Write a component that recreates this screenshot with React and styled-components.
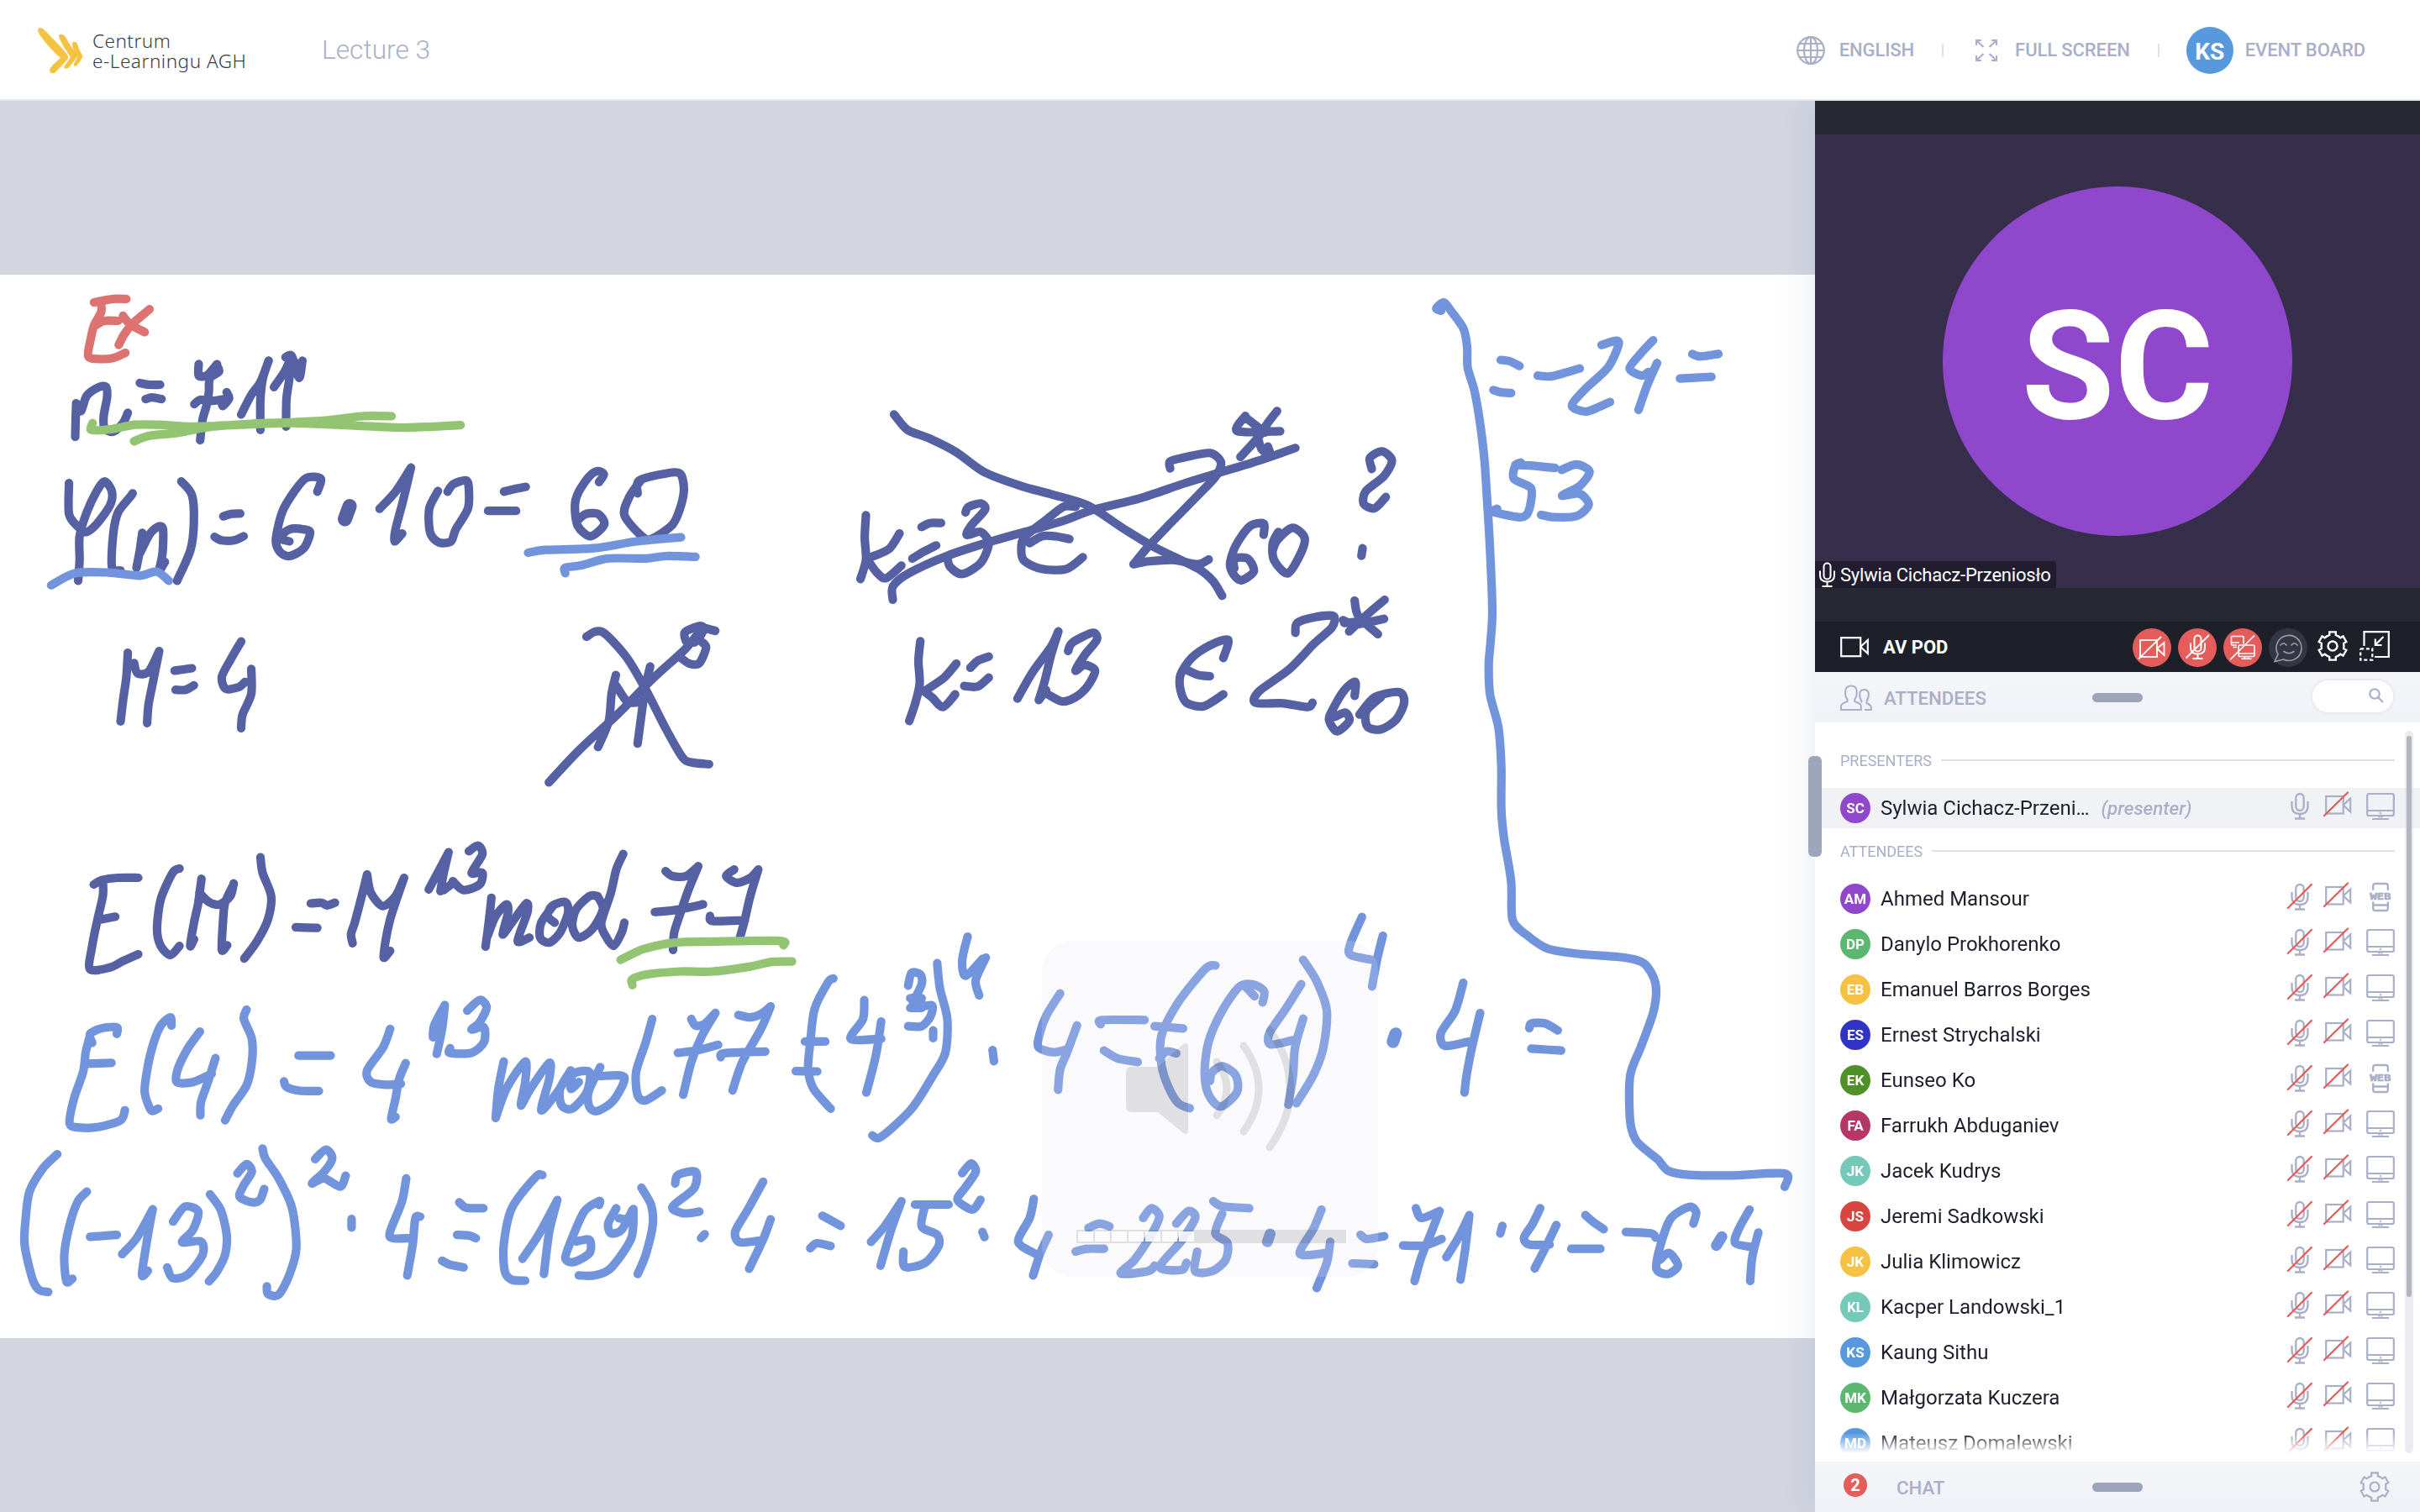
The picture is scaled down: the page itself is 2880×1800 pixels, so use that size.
import React from "react";
import styled, { createGlobalStyle } from "styled-components";

const GlobalStyle = createGlobalStyle`
  *, *::before, *::after { box-sizing: border-box; }
  body { margin: 0; overflow: hidden; background: #fff; font-family: Roboto, "Noto Sans", sans-serif; }
`;

const MUTED = "#a9afc6";
const RED = "#e45d5a";

/* ---------- page frame ---------- */

const Page = styled.div`
  width: 2880px;
  height: 1800px;
  display: flex;
  flex-direction: column;
  overflow: hidden;
`;

const TopBar = styled.header`
  position: relative;
  z-index: 1;
  height: 120px;
  flex: none;
  display: flex;
  align-items: center;
  border-bottom: 2px solid #e7ebf1;
  background: #fff;
  padding: 2px 65px 0 45px;
`;

const Brand = styled.div`
  width: 338px;
  display: flex;
  align-items: center;
  gap: 11px;
`;

const BrandText = styled.div`
  font-family: "Noto Sans", "Open Sans", sans-serif;
  font-weight: 300;
  font-size: 22.5px;
  line-height: 24px;
  color: #3c3c3e;
  white-space: nowrap;
  padding-top: 2px;
`;

const BrandLine = styled.div`
  letter-spacing: ${(p) => p.$spacing}px;
`;

const Title = styled.h1`
  margin: 0;
  flex: 1;
  font-weight: 300;
  font-size: 31.7px;
  line-height: 40px;
  color: ${MUTED};
`;

const TopNav = styled.nav`
  display: flex;
  align-items: center;
`;

const NavItem = styled.div`
  display: flex;
  align-items: center;
  gap: ${(p) => p.$gap}px;
  font-weight: 500;
  font-size: 22px;
  letter-spacing: -0.1px;
  line-height: 28px;
  color: ${MUTED};
  white-space: nowrap;
`;

const NavDivider = styled.div`
  width: 2px;
  height: 16px;
  margin: 0 ${(p) => p.$after}px 0 33px;
  background: #dfe2ea;
`;

const Body = styled.div`
  flex: 1;
  display: flex;
  min-height: 0;
`;

/* ---------- whiteboard ---------- */

const Stage = styled.main`
  width: 2160px;
  background: #d3d6e1;
  padding: 207px 0;
  display: flex;
`;

const Board = styled.section`
  position: relative;
  flex: 1;
  background: #fff;
  overflow: hidden;
`;

const InkLayer = styled.svg`
  display: block;
  width: 2160px;
  height: 1266px;
`;

const VolumeHud = styled.div`
  position: absolute;
  left: 1240px;
  top: 793px;
  width: 400px;
  height: 400px;
  border-radius: 36px;
  background: rgba(232, 232, 242, 0.2);
  display: flex;
  flex-direction: column;
  justify-content: space-between;
  padding: 94px 38px 40px 41px;
`;

const SpeakerArt = styled.svg`
  display: block;
  width: 220px;
  height: 170px;
  margin-left: 52px;
`;

const Level = styled.div`
  display: flex;
  width: 321px;
  height: 16px;
  background: rgba(0, 0, 0, 0.1);
  padding: 2px 0 2px 2px;
  gap: 2px;
`;

const LevelCell = styled.div`
  width: 18px;
  background: rgba(255, 255, 255, 0.85);
`;

/* ---------- side panel ---------- */

const Side = styled.aside`
  position: relative;
  width: 720px;
  display: flex;
  flex-direction: column;
  background: #fff;
  box-shadow: 0 0 44px rgba(80, 100, 130, 0.14);
`;

const Resizer = styled.div`
  position: absolute;
  left: -8px;
  top: 780px;
  width: 16px;
  height: 120px;
  border-radius: 6px;
  background: #9ca5ba;
`;

const VideoPod = styled.div`
  height: 620px;
  padding: 40px 0;
  background: #262931;
`;

const VideoTile = styled.div`
  position: relative;
  height: 540px;
  background: #372e4b;
  display: flex;
  align-items: center;
  justify-content: center;
`;

const Avatar = styled.div`
  flex: none;
  width: ${(p) => p.$size}px;
  height: ${(p) => p.$size}px;
  border-radius: 50%;
  background: ${(p) => p.$color};
  color: #fff;
  font-weight: 700;
  font-size: ${(p) => p.$font}px;
  line-height: 1;
  padding-top: ${(p) => p.$drop || 0}px;
  display: flex;
  align-items: center;
  justify-content: center;
`;

const SpeakerTag = styled.div`
  position: absolute;
  left: 0;
  bottom: 0;
  height: 32px;
  padding: 1px 6px 0 5px;
  display: flex;
  align-items: center;
  gap: 6px;
  border-top-right-radius: 4px;
  background: #211c2e;
  color: #fff;
  font-size: 22px;
  letter-spacing: -0.2px;
  line-height: 32px;
  white-space: nowrap;
`;

const PodBar = styled.div`
  height: 60px;
  flex: none;
  display: flex;
  align-items: center;
  padding: 0 36px 0 30px;
  background: #1d1f29;
  color: #fff;
`;

const PodTitle = styled.div`
  flex: 1;
  padding: 1px 0 0 17px;
  font-weight: 700;
  font-size: 22px;
`;

const PodTools = styled.div`
  display: flex;
  align-items: center;
  gap: 8px;
  padding-top: 1px;
`;

const RoundTool = styled.div`
  width: 46px;
  height: 46px;
  border-radius: 50%;
  background: ${(p) => (p.$off ? RED : "#343743")};
  display: flex;
  align-items: center;
  justify-content: center;
`;

const PlainTool = styled.div`
  width: ${(p) => p.$width}px;
  height: 46px;
  margin-left: ${(p) => p.$before || 0}px;
  display: flex;
  align-items: center;
  justify-content: center;
  padding-bottom: 3px;
`;

const PanelBar = styled.div`
  height: 60px;
  flex: none;
  display: grid;
  grid-template-columns: 1fr 60px 1fr;
  align-items: center;
  padding: 0 30px;
  background: linear-gradient(#f5f6fa, #eff1f6);
`;

const PanelTitle = styled.div`
  display: flex;
  align-items: center;
  gap: ${(p) => p.$gap}px;
  padding-top: 1px;
  font-weight: 500;
  font-size: 22.2px;
  line-height: 28px;
  color: ${MUTED};
`;

const Grip = styled.div`
  height: 11px;
  border-radius: 5.5px;
  background: #9ca5ba;
`;

const PanelEnd = styled.div`
  display: flex;
  justify-content: flex-end;
  padding-right: ${(p) => p.$inset || 0}px;
`;

const SearchBox = styled.div`
  width: 100px;
  height: 42px;
  margin-bottom: 3px;
  border: 2px solid #e9ebf1;
  border-radius: 21px;
  background: #fff;
  display: flex;
  align-items: center;
  justify-content: flex-end;
  padding: 0 11px 2px 0;
`;

const Unread = styled.div`
  width: 28px;
  height: 28px;
  margin: 0 0 5px 4px;
  border-radius: 50%;
  background: ${RED};
  color: #fff;
  font-weight: 700;
  font-size: 20px;
  line-height: 29px;
  text-align: center;
`;

const Roster = styled.div`
  position: relative;
  height: 880px;
  flex: none;
  background: #fff;
`;

const RosterList = styled.div`
  height: 870px;
  overflow: hidden;
  padding-top: 30px;
  mask-image: linear-gradient(#000 846px, transparent 870px);
`;

const Section = styled.div`
  display: flex;
  align-items: center;
  gap: 11px;
  height: 30px;
  margin: ${(p) => p.$before}px 30px 18px;
  font-size: 18px;
  color: ${MUTED};
  &::after {
    content: "";
    flex: 1;
    height: 2px;
    background: #dde2e9;
  }
`;

const Person = styled.div`
  height: 48px;
  margin-bottom: ${(p) => (p.$lead ? 0 : 6)}px;
  padding: 0 30px;
  display: flex;
  align-items: center;
  background: ${(p) => (p.$lead ? "#f1f2f6" : "transparent")};
`;

const PersonName = styled.div`
  padding-left: 12px;
  font-size: 24px;
  line-height: 32px;
  color: #1d1f2b;
  white-space: nowrap;
`;

const Role = styled.div`
  padding-left: 14px;
  font-style: italic;
  font-weight: 500;
  font-size: 22.4px;
  color: ${MUTED};
`;

const StatusIcons = styled.div`
  margin-left: auto;
  display: flex;
  align-items: center;
  & > :nth-child(1) { margin-right: 13px; margin-top: -5px; }
  & > :nth-child(2) { margin-right: 17px; margin-top: -9px; }
  & > :nth-child(3) { margin-top: -5px; }
`;

const ScrollTrack = styled.div`
  position: absolute;
  right: 8px;
  top: 10px;
  width: 10px;
  height: 860px;
  padding: 6px 2px;
  border-radius: 5px;
  background: rgba(205, 207, 217, 0.4);
`;

const ScrollThumb = styled.div`
  height: 668px;
  border-radius: 3px;
  background: #b3b6c1;
`;

/* ---------- icons ---------- */

const Glyph = styled.svg`
  display: block;
  flex: none;
`;

const Svg = ({ w, h, color = "currentColor", sw = 2, children }) => (
  <Glyph width={w} height={h} viewBox={`0 0 ${w} ${h}`} fill="none" stroke={color} strokeWidth={sw}>
    {children}
  </Glyph>
);

const Chevrons = () => (
  <Svg w={54} h={56} color="#f5c242" sw={0}>
    <g fill="#f5c242">
      <path d="M0 5C0 0 4 0 7 3C18 14 29 25 35 33C37 36 36 37 35 39C31 43 25 50 21 54C17 57 12 54 15 49C18 44 23 41 27 37C18 29 4 14 0 5Z" />
      <path d="M25 11C25 8 30 8 33 12C36 18 42 27 46 32C48 35 46 37 45 38C42 42 39 47 36 49C33 51 30 49 32 46C34 43 37 40 39 36C35 30 26 17 25 11Z" />
      <path d="M41 20C41 17 45 17 47 20C48 25 51 30 53 34C54 36 53 37 52 38C50 41 48 45 46 46C44 48 42 46 43 44C44 41 46 39 47 36C44 30 41 25 41 20Z" />
    </g>
  </Svg>
);

const Globe = () => (
  <Svg w={34} h={34} sw={2.2}>
    <circle cx="17" cy="17" r="15.8" />
    <ellipse cx="17" cy="17" rx="8" ry="15.8" />
    <path d="M17 1V33M1 17H33M3.5 9H30.500M3.500 25H30.500" />
  </Svg>
);

const Expand = () => (
  <Svg w={26} h={26} sw={2.2}>
    <path d="M1 7V1H7M1 1L9.500 9M19 1H25V7M25 1L16.500 9M1 19V25H7M1 25L9.500 17M19 25H25V19M25 25L16.500 17" />
  </Svg>
);

const Mic = ({ muted }) => (
  <Svg w={30} h={34} color={MUTED} sw={2.300}>
    <rect x="10.300" y="2" width="9.400" height="20" rx="4.700" />
    <path d="M5.500 11V17C5.500 22.500 9 26 15 26C21 26 24.500 22.500 24.500 17V11M15 26V31M9 31.500H21" />
    {muted && <path d="M0.800 30L28.800 2" stroke={RED} strokeWidth="2.300" strokeLinecap="round" />}
  </Svg>
);

const WhiteMic = ({ slash }) => (
  <Svg w={slash ? 28 : 19} h={31} color="#fff" sw={2}>
    <g transform={slash ? "translate(5 0)" : undefined}>
      <rect x="5.500" y="1.500" width="8" height="19" rx="4" />
      <path d="M1 10.500V16C1 21 4.500 23.500 9.500 23.500C14.500 23.500 18 21 18 16V10.500M9.500 23.500V28M3.500 29H15.500" />
    </g>
    {slash && <path d="M0.500 28.500L28 1" />}
  </Svg>
);

const CamStatus = () => (
  <Svg w={34} h={34} color={MUTED} sw={2.200}>
    <rect x="3.200" y="7" width="20.500" height="20.500" />
    <path d="M23.700 17.500L32.200 9.500V25.500L23.700 17.500" />
    <path d="M1 30L29 2.500" stroke={RED} strokeWidth="2.300" strokeLinecap="round" />
  </Svg>
);

const Camera = ({ slash }) => (
  <Svg w={34} h={28} color="#fff" sw={slash ? 1.800 : 2.200}>
    <rect x={slash ? 3 : 1.200} y={slash ? 5 : 3.200} width={slash ? 20 : 23} height={slash ? 20 : 22} />
    <path d={slash ? "M23 15L31.500 8V23L23 15" : "M24.200 14L32.800 6V22L24.200 14"} />
    {slash && <path d="M1 27.500L28 1" />}
  </Svg>
);

const Screens = () => (
  <Svg w={30} h={30} color="#fff" sw={1.600}>
    <path d="M8 12H2.500Q1.500 12 1.500 11V2.500Q1.500 1.500 2.500 1.500H15Q16 1.500 16 2.500V10.500M1.500 9H11M3.500 14.500H8" />
    <rect x="10" y="12" width="19" height="13.500" rx="1.500" />
    <path d="M10 22H29M17.500 25.500V28M21.500 25.500V28M13.500 28.300H25.500M0 29.500L29 0.500" />
  </Svg>
);

const Smiley = () => (
  <Svg w={36} h={36} color="#9c9ea6" sw={1.600}>
    <path d="M6 26A15 15 0 1 1 12.500 32L2 34.500Z" />
    <path d="M9 15Q12.500 10.500 16 15M22 15Q25.500 10.500 29 15M13 22.500Q19 27 25 22.500" strokeLinecap="round" />
  </Svg>
);

const gearPath = (() => {
  const pts = [];
  for (let i = 0; i < 6; i++) {
    const a = (i * Math.PI) / 3 - Math.PI / 2;
    const at = (r, off) => [18 + r * Math.cos(a) - off * Math.sin(a), 18 + r * Math.sin(a) + off * Math.cos(a)];
    pts.push(at(11.6, -6.7), at(13, -3.8), at(16.6, -3.8), at(16.600, 3.800), at(13, 3.800), at(11.600, 6.700));
  }
  return "M" + pts.map((p) => p.map((n) => n.toFixed(2)).join(" ")).join("L") + "Z";
})();

const Gear = ({ color, sw = 2 }) => (
  <Svg w={36} h={36} color={color} sw={sw}>
    <path d={gearPath} />
    <circle cx="18" cy="18" r="5.500" />
  </Svg>
);

const Dock = () => (
  <Svg w={36} h={36} color="#fff" sw={2.200}>
    <path d="M5.500 18V1.200H34.800V31H18" />
    <path d="M28.500 7L19 16.500M18.800 9.500V17H26.500" />
    <path d="M1.200 21.300H15.300V34.700H1.200V21.300" strokeDasharray="4 2.700" />
  </Svg>
);

const People = () => (
  <Svg w={38} h={32} color={MUTED} sw={2}>
    <path d="M1 30V25.500C1 23 4 21.800 8.500 20V17.500C6.500 15.500 5.800 12 6.200 7.500C6.500 3.500 9 1.500 13 1.500C17 1.500 19.300 3.500 19.600 7.500C20 12 19.200 15.500 17.200 17.500V20C22 21.800 24.800 23 24.800 25.500V30Z" />
    <path d="M29 30H36.800V27C36.800 24.500 34.500 23.500 31.500 22V19.500C33.500 17 34 14.500 33.800 11C33.500 8 31.500 6 28.500 6C25.500 6 23.500 8 23.200 11C23 14.500 23.500 17 25.300 19.500V21.500" />
  </Svg>
);

const Lens = () => (
  <Svg w={18} h={18} color={MUTED} sw={2.2}>
    <circle cx="7" cy="7" r="5.700" />
    <path d="M11 11L17 17" />
  </Svg>
);

const Monitor = () => (
  <Svg w={34} h={34} color={MUTED} sw={2.200}>
    <rect x="1.200" y="2" width="31.600" height="26" rx="2" />
    <path d="M1 22H33M15.500 28V30.500M18.500 28V30.500M7 32H27" />
    <circle cx="17" cy="25" r="1" strokeWidth="1" />
  </Svg>
);

const WebPhone = () => (
  <Svg w={34} h={36} color={MUTED} sw={2.300}>
    <path d="M8.200 9.800V4.500Q8.200 2 10.700 2H23.300Q25.800 2 25.800 4.500V9.800M8.200 23.500V31.500Q8.200 34 10.700 34H23.300Q25.800 34 25.800 31.500V23.500M8.200 27.500H25.800" />
    <text x="17" y="20.500" textAnchor="middle" fontFamily='"DejaVu Sans Mono", monospace' fontWeight="700" fontSize="11" textLength="25" lengthAdjust="spacingAndGlyphs" fill={MUTED} strokeWidth="0.700">WEB</text>
  </Svg>
);

/* ---------- handwriting ---------- */

const NAVY = "#5561a2";
const BLUE = "#7294dd";
const ROSE = "#dc7370";
const LEAF = "#93c472";

/* Each patch of the board keeps its pen points on its own grid. */
const patches = [
  {
    origin: [0, 320],
    unit: [900 / 1568, 640 / 1568],
    ink: [
      [ROSE, "262,88 235,88 195,98;209,98 210,125 195,165 188,205 183,255 205,263 235,260 260,245;195,168 215,152 245,152;255,137 270,162 300,185;310,118 275,160 258,190 246,222"],
      [NAVY, "158,392 157,430 156,490;158,400 168,415 180,370 205,345 220,345 222,375 215,430 217,465 235,475 255,450 265,420;290,333 310,338 332,338;302,380 315,375 335,380"],
      [NAVY, "412,278 412,312 430,310 450,278;450,282 454,300 435,320 433,360 428,400 420,440 415,500;403,395 415,382 440,385 465,380;470,360 475,378 462,400 460,385;500,425 520,370 540,330 557,268;557,268 545,320 540,380 540,470"],
      [NAVY, "568,345 590,300 605,255;592,258 605,255 620,318 627,268;605,255 600,320 594,380 593,460;610,270 620,300"],
      [NAVY, "143,625 143,715 160,750 178,768 200,745 228,690 232,650 217,620 200,650 180,710 165,780 165,850 162,910;275,655 270,665 245,710 235,770 232,870 250,880;295,770 290,820 283,872;290,830 310,775 328,752 338,760 337,830 330,880 342,855;376,620 398,660 402,740 395,820 367,910"],
      [NAVY, "463,722 480,715 498,714;445,782 460,792 485,792 505,780;658,650 665,612 635,610 610,650 585,710 572,790 580,825 600,838 630,815 643,770 630,760 600,760 580,785 600,795"],
      [NAVY, "725,692 715,730", 17],
      [NAVY, "787,700 820,650 852,580;852,580 835,680 820,760 818,795 834,772;908,648 890,700 892,770 910,798 935,795 945,760 970,700 972,640 966,617 940,628 928,650;1045,650 1065,643 1090,636;1012,706 1070,706"],
      [NAVY, "1242,622 1252,600 1240,590 1222,605 1200,650 1192,690 1198,750 1225,780 1253,745 1240,715 1215,715 1200,730;1322,655 1325,618 1380,597 1410,597 1418,640 1412,690 1395,745 1355,785 1335,785 1295,720 1305,665 1330,615"],
      [LEAF, "192,450 190,470 230,468 280,455 330,455 400,460 500,455 600,450 700,455 830,463 900,460 955,456;278,503 310,487 370,478 430,462 520,452 600,448 680,442 750,430 812,430"],
      [BLUE, "1095,828 1130,820 1230,815 1320,795 1412,783;1172,888 1172,872 1205,865 1260,845 1340,845 1380,838 1442,840;106,923 155,888 225,886 290,895 325,883 350,910"],
      [NAVY, "265,1120 262,1190 255,1260 250,1320;278,1150 285,1180 308,1175 330,1115;330,1115 318,1200 308,1270 305,1325;362,1172 398,1165;364,1228 385,1228 402,1215;500,1087 478,1140 460,1190 468,1225 495,1220 508,1205;521,1167 521,1240 503,1300 500,1340"],
      [NAVY, "1216,1073 1235,1058 1255,1065 1300,1135 1340,1230 1380,1340 1415,1425 1435,1440 1470,1445;1138,1498 1200,1405 1280,1300 1350,1200 1420,1110 1455,1050;1277,1185 1268,1240 1262,1320 1240,1395;1277,1215 1300,1262 1320,1265;1348,1160 1338,1220 1330,1300 1322,1385"],
      [NAVY, "1422,1085 1420,1060 1450,1042 1460,1050 1450,1075 1440,1090;1483,1056 1455,1045;1455,1088 1464,1105 1450,1150 1430,1152 1412,1135"],
    ],
  },
  {
    origin: [960, 460],
    unit: [1140 / 1568, 1 / 3],
    ink: [
      [NAVY, "143,100 165,155 200,185 245,235 290,305 350,355 400,385 460,425 520,510 570,575 640,650 665,695 680,748;141,762 141,715 165,670 230,605 300,555 370,512 420,480 470,440 545,400 620,345 680,305 740,265 800,220"],
      [NAVY, "97,460 95,540 97,620 88,688;152,525 135,580 105,610;100,620 115,665 130,685 155,640;188,502 202,488 220,488;173,615 190,592 212,568;260,450 265,430 285,418 292,440 270,495 262,530 285,520 298,560 285,630 255,670 235,645 230,610"],
      [NAVY, "440,430 420,430 390,480 360,530 352,560 355,620 385,652 425,652 452,610;365,560 385,535 405,535 430,545;595,293 595,268 620,253 660,238 678,270 670,320 640,390 595,490 560,570 535,635;535,635 560,625 600,620 640,635 658,618"],
      [NAVY, "718,105 705,160 775,160;718,110 750,165;770,88 755,130 740,180 710,252;738,180 745,225 758,240 755,215;748,530 748,490 725,500 702,570 693,635 700,675 712,692 732,660 722,615 700,615 700,650;772,520 763,560 765,620 787,668 808,600 815,540 795,505 770,550 763,585"],
      [NAVY, "925,295 922,255 942,232 958,265 945,320 915,375 912,420 930,435 948,395;910,578 908,605"],
      [NAVY, "186,910 183,980 185,1060 178,1130 168,1195;245,990 225,1040 195,1085;190,1085 205,1110 223,1145 243,1100;268,1005 280,980 298,965;258,1070 280,1072 298,1040;345,1115 370,1020 400,930 412,875;412,875 400,960 390,1050 380,1120;380,1120 392,1085;428,945 435,915 468,880 475,905 455,960 440,1015 455,995 472,1015 460,1070 440,1110 418,1125 395,1100"],
      [NAVY, "682,970 690,905 660,925 630,970 612,1030 612,1085 622,1130 650,1142 682,1100;620,1010 640,1030 660,1035;800,880 803,845 830,825 862,820 860,860 830,920 790,1010 740,1090 735,1130 780,1132 820,1145 828,1130"],
      [NAVY, "897,765 903,820 935,885;946,762 920,810 888,875;878,835 900,850 945,830;880,845 912,838;897,1105 898,1055 880,1085 862,1150 855,1190 868,1232 888,1195 882,1165 865,1180;905,1172 930,1110 970,1092 978,1130 965,1190 940,1225 918,1215 916,1160 940,1110"],
    ],
  },
  {
    origin: [1660, 320],
    unit: [1 / 3, 1120 / 1568],
    ink: [
      [BLUE, "165,70 148,66 175,56 200,70 245,100 258,130 260,165 285,205 305,260 320,320 330,390 340,470 348,570 342,620 335,660 340,710 370,765 380,830 380,900 390,950 415,1020 420,1085 470,1110 545,1133 660,1142 820,1148 890,1158 930,1190 925,1235 880,1295 840,1345 840,1420 860,1452 900,1470 940,1485 975,1503 1050,1510 1200,1511 1392,1508 1392,1530"],
      [BLUE, "378,152 410,154 445,162;352,202 380,206 415,207;510,178 560,179 660,166;738,127 790,120 798,128 760,165 680,200 632,228 680,238 730,230 768,222;922,119 880,140 838,166 880,178 905,172;936,157 900,195 870,235;1062,142 1090,146 1155,142;1018,183 1130,180"],
      [BLUE, "450,323 430,328 425,350 485,365 485,390 470,410 440,414 350,405 365,400;430,327 490,328 572,332;595,335 650,326 695,338 660,362 597,378 660,375 692,393 650,412 570,414 522,410"],
    ],
  },
  {
    origin: [0, 960],
    unit: [1000 / 1568, 620 / 1568],
    ink: [
      [NAVY, "175,235 190,222 220,215 258,215;192,225 192,270 182,340 172,420 168,490 205,485 230,465 258,445;183,342 215,332;335,187 322,200 300,280 293,370 300,420 318,448 335,420;376,218 370,290 362,350 355,420 362,400;372,260 390,288 410,295 430,270 436,232;436,235 420,290 416,350 414,432 424,418;486,153 490,200 506,270 500,340 480,405 456,458"],
      [NAVY, "580,292 600,290 610,298 625,290;552,364 592,366;685,205 675,270 662,350 655,385 658,412;685,205 692,260 714,300 738,270 754,215;754,215 740,280 728,340 720,400 716,455 728,435;800,250 820,190 837,138;837,138 828,200 822,255;828,252 842,235;875,135 892,118 900,145 880,200 900,200 895,235 865,252 845,225"],
      [NAVY, "917,275 912,350 906,422;910,390 925,330 945,295 948,320 938,385 955,350 982,292 984,320 966,405 988,395;1032,300 1010,350 1008,395 1025,410 1045,380 1060,320 1055,288 1030,300 1022,330 1035,350;1115,270 1100,270 1075,310 1068,360 1080,395 1105,370 1125,310 1115,270;1163,143 1150,190 1140,260 1122,350 1130,390 1145,420 1160,380 1165,350"],
      [NAVY, "1242,195 1255,210 1280,210 1303,180;1303,180 1285,250 1270,320 1258,380 1256,432;1222,318 1260,312 1312,295;1370,190 1355,210 1375,230 1400,215 1415,190;1415,190 1400,270 1390,340 1380,400;1325,330 1330,345 1390,343"],
      [LEAF, "1158,462 1200,430 1260,410 1330,407 1455,405 1462,418;1180,538 1180,520 1210,505 1270,497 1330,497 1400,482 1440,468 1478,467"],
      [BLUE, "218,685 218,665 190,668 168,685 172,712;168,690 160,740 155,800 138,880 130,955 150,967 185,965 225,945 233,915;160,775 208,772;320,660 318,635 300,660 285,720 275,790 270,860 282,915 295,910;373,678 350,730 332,790 330,830 360,830 395,805;402,758 388,830 375,890 374,930;460,612 455,640 470,700 470,770 460,840 435,900 420,945"],
      [BLUE, "557,750 617,750;530,828 535,845 560,856 595,857;728,670 715,725 685,795 692,830 720,838 748,835;757,773 745,820 738,880 730,940 738,935;808,695 810,660 830,598;830,598 825,670 815,745;872,615 895,583 908,605 895,650 880,672 903,665 903,710 880,742 840,742 840,728"],
      [BLUE, "940,768 930,850 925,938;925,938 945,850 980,768 980,830 972,900 990,850 1025,772 1025,820 1010,915 1040,860 1065,795;1065,795 1045,850 1048,900 1068,910 1095,860 1100,800 1070,805 1065,850 1080,830;1120,785 1098,860 1100,905 1115,917 1145,885 1165,815 1120,812;1217,640 1205,710 1187,800 1190,870 1205,885 1235,855"],
      [BLUE, "1290,640 1298,660 1315,655 1335,622;1335,622 1310,690 1290,770 1275,868;1265,742 1300,735 1340,718;1378,628 1400,635 1420,625 1438,602;1438,602 1420,670 1385,770 1367,855;1345,755 1352,743 1428,738;1555,518 1545,530 1520,610 1512,710 1508,790 1518,850 1550,910;1502,708 1540,708;1485,797 1525,798"],
      [BLUE, "107,1047 80,1090 55,1160 48,1240 46,1320 60,1420 72,1455 90,1462;162,1160 145,1190 130,1260 120,1350 124,1430 135,1422;168,1296 190,1293 218,1290;228,1348 255,1300 285,1213;285,1213 275,1300 265,1410 276,1398;323,1250 345,1205 370,1220 360,1275 340,1312 375,1310 378,1350 350,1410 322,1420 312,1388;392,1168 412,1215 423,1290 420,1350 405,1400 390,1430"],
      [BLUE, "443,1105 460,1077 470,1100 455,1140 447,1175 470,1192 485,1185 493,1152;490,1030 495,1060 520,1120 545,1210 553,1330 540,1410 520,1470 500,1468 498,1445;588,1062 608,1033 620,1060 605,1100 582,1135 605,1120 635,1145 645,1112;656,1242 656,1268"],
      [BLUE, "758,1120 750,1190 728,1280 732,1300 765,1300;784,1235 775,1240 770,1320 760,1412;857,1192 870,1208 902,1210;853,1290 875,1292 888,1300;825,1368 840,1380 865,1388;1012,1110 1000,1115 955,1210 940,1320 942,1400 955,1425 980,1428;975,1362 1005,1290 1040,1185;1040,1185 1025,1280 1015,1408"],
      [BLUE, "1118,1200 1118,1188 1090,1220 1065,1310 1055,1360 1070,1372 1100,1345 1100,1305 1075,1310;1150,1210 1135,1255 1140,1285 1160,1275 1180,1215;1155,1240 1172,1245;1182,1212 1178,1300 1140,1390 1110,1412 1080,1412;1197,1148 1215,1200 1218,1260 1205,1350 1190,1408;1260,1135 1265,1110 1298,1100 1295,1150 1255,1205 1275,1225 1305,1220;1315,1288 1308,1300;1424,1130 1395,1215 1372,1280 1380,1312 1415,1308;1438,1243 1425,1300 1398,1392"],
    ],
  },
  {
    origin: [900, 1080],
    unit: [1260 / 1568, 1 / 3],
    ink: [
      [BLUE, "160,332 158,400 140,470 185,470;185,408 178,520 170,600 163,662;225,280 230,235 243,240 245,275 232,340;228,325 245,325 235,360 260,350 258,390 245,425 225,425;228,360 245,360;262,440 262,468;268,200 272,290 283,400 280,520 262,600 230,720 185,820 172,815;313,105 305,190 310,245 335,185;340,180 325,260 330,315;350,510 352,550"],
      [BLUE, "450,308 430,385 420,450 418,500 440,518 460,508;475,422 460,520 450,580 447,652;510,418 512,403 575,403;515,512 535,540 565,553;680,208 665,220 625,340 600,460 600,560 610,640 625,700 642,718;590,425 632,433;597,540 608,515 622,522"],
      [BLUE, "750,340 752,300 735,275 715,285 690,370 670,480 664,590 670,670 688,712 712,660 710,600 690,568 675,590 672,620;725,285 738,318;807,275 785,360 760,450 762,490 795,475;810,398 798,500 795,600 788,705;810,188 830,265 845,370 840,500 825,600 800,700;897,35 880,130 880,170 912,188;928,102 920,180 912,283"],
      [BLUE, "947,452 943,480", 15],
      [BLUE, "1047,270 1035,370 1014,450 1020,495 1055,480;1072,378 1060,500 1052,600 1049,662;1145,432 1148,415 1168,415 1187,440;1148,505 1192,512"],
      [BLUE, "98,1102 125,1138;80,1218 90,1200 110,1210;170,1195 190,1140 215,1050;215,1050 200,1150 184,1280;250,1065 245,1140 268,1170 270,1210 250,1270 220,1285 218,1230;235,1062 285,1062;305,950 318,915 325,945 310,1000 298,1045 320,1080 332,1045;335,1160 338,1178;411,1042 405,1110 388,1195 415,1240;433,1170 420,1240 410,1315"],
      [BLUE, "492,1145 508,1130 523,1140;473,1230 490,1220 515,1220;573,1110 585,1075 597,1105 585,1170 560,1260 540,1308 580,1300 590,1280;622,1130 640,1085 650,1110 630,1190 598,1285 630,1295 637,1270;690,1095 680,1165 698,1200 695,1260 675,1300 650,1300 653,1230;677,1050 690,1068 730,1075;837,1080 825,1150 805,1238 845,1235;850,1195 845,1270 830,1360;895,1170 905,1185 930,1175;883,1272 915,1275"],
      [BLUE, "761,1167 757,1195;1430,1177 1422,1208", 13],
      [BLUE, "977,1075 985,1110 1012,1085;1012,1085 1000,1160 985,1250 975,1335;958,1208 990,1208 1015,1185;1022,1250 1040,1180 1056,1100;1056,1100 1050,1220 1043,1330;1105,1138 1102,1165;1161,1075 1150,1130 1137,1180 1145,1205 1175,1205;1185,1135 1170,1210 1153,1290;1228,1100 1240,1125 1255,1150;1207,1220 1250,1220"],
      [BLUE, "1288,1160 1325,1165 1332,1180;1388,1130 1392,1090 1382,1070 1355,1110 1340,1200 1333,1290 1350,1310 1365,1280 1352,1235 1338,1260;1471,1080 1455,1150 1450,1200 1478,1215;1484,1162 1475,1250 1472,1335"],
    ],
  },
];

const BOARD_TOP = 327;

function penPath(points) {
  let d = `M${points[0][0]} ${points[0][1]}`;
  for (let i = 0; i < points.length - 1; i++) {
    const a = points[i - 1] || points[i];
    const b = points[i];
    const c = points[i + 1];
    const e = points[i + 2] || c;
    const k = 1 / 7;
    const c1 = [b[0] + (c[0] - a[0]) * k, b[1] + (c[1] - a[1]) * k];
    const c2 = [c[0] - (e[0] - b[0]) * k, c[1] - (e[1] - b[1]) * k];
    d += `C${[...c1, ...c2, ...c].map((n) => n.toFixed(1)).join(" ")}`;
  }
  return d;
}

const inkPaths = patches.flatMap(({ origin, unit, ink }) =>
  ink.map(([color, strokes, width = 10.2]) => ({
    color,
    width,
    d: strokes
      .split(";")
      .map((s) =>
        penPath(
          s.split(" ").map((pair) => {
            const [x, y] = pair.split(",").map(Number);
            return [origin[0] + x * unit[0], origin[1] + y * unit[1] - BOARD_TOP];
          })
        )
      )
      .join(""),
  }))
);

const Handwriting = () => (
  <InkLayer viewBox="0 0 2160 1266" fill="none" strokeLinecap="round" strokeLinejoin="round">
    {inkPaths.map((p, i) => (
      <path key={i} d={p.d} stroke={p.color} strokeWidth={p.width} />
    ))}
  </InkLayer>
);

/* ---------- data ---------- */

const people = [
  ["AM", "Ahmed Mansour", "#8f47cc", true],
  ["DP", "Danylo Prokhorenko", "#5cb870"],
  ["EB", "Emanuel Barros Borges", "#f5c244"],
  ["ES", "Ernest Strychalski", "#3034c6"],
  ["EK", "Eunseo Ko", "#4f9029", true],
  ["FA", "Farrukh Abduganiev", "#b63667"],
  ["JK", "Jacek Kudrys", "#74c9b8"],
  ["JS", "Jeremi Sadkowski", "#d9453f"],
  ["JK", "Julia Klimowicz", "#f5c244"],
  ["KL", "Kacper Landowski_1", "#74c9b8"],
  ["KS", "Kaung Sithu", "#5899dd"],
  ["MK", "Małgorzata Kuczera", "#5cb870"],
  ["MD", "Mateusz Domalewski", "#5899dd"],
];

const PersonRow = ({ initials, name, color, web, lead }) => (
  <Person $lead={lead}>
    <Avatar $size={36} $font={17} $drop={1} $color={color}>{initials}</Avatar>
    <PersonName>{name}</PersonName>
    {lead && <Role>(presenter)</Role>}
    <StatusIcons>
      <Mic muted={!lead} />
      <CamStatus />
      {web ? <WebPhone /> : <Monitor />}
    </StatusIcons>
  </Person>
);

export default function App() {
  return (
    <Page>
      <GlobalStyle />
      <TopBar>
        <Brand>
          <Chevrons />
          <BrandText>
            <BrandLine $spacing={0.5}>Centrum</BrandLine>
            <BrandLine $spacing={0.55}>e-Learningu AGH</BrandLine>
          </BrandText>
        </Brand>
        <Title>Lecture 3</Title>
        <TopNav>
          <NavItem $gap={17}><Globe />ENGLISH</NavItem>
          <NavDivider $after={38} />
          <NavItem $gap={21}><Expand />FULL SCREEN</NavItem>
          <NavDivider $after={32} />
          <NavItem $gap={14}>
            <Avatar $size={56} $font={28} $drop={3} $color="#5899dd">KS</Avatar>
            EVENT BOARD
          </NavItem>
        </TopNav>
      </TopBar>
      <Body>
        <Stage>
          <Board>
            <Handwriting />
            <VolumeHud>
              <SpeakerArt viewBox="0 0 220 170" fill="none">
                <g stroke="#000" strokeOpacity="0.1" strokeWidth="9" strokeLinecap="round">
                  <path d="M115 50Q139 82 115 114" />
                  <path d="M147 31Q183 82 147 133" />
                  <path d="M178 12Q227 82 178 152" />
                </g>
                <path d="M14 56H45L74 30Q81 25 81 33V131Q81 139 74 134L45 110H14Q7 110 7 103V63Q7 56 14 56Z" fill="#000" fillOpacity="0.1" />
              </SpeakerArt>
              <Level>
                {Array.from({ length: 7 }, (_, i) => <LevelCell key={i} />)}
              </Level>
            </VolumeHud>
          </Board>
        </Stage>
        <Side>
          <VideoPod>
            <VideoTile>
              <Avatar $size={416} $font={180} $drop={14} $color="#8f47cc">SC</Avatar>
              <SpeakerTag><WhiteMic />Sylwia Cichacz-Przeniosło</SpeakerTag>
            </VideoTile>
          </VideoPod>
          <PodBar>
            <Camera />
            <PodTitle>AV POD</PodTitle>
            <PodTools>
              <RoundTool $off><Camera slash /></RoundTool>
              <RoundTool $off><WhiteMic slash /></RoundTool>
              <RoundTool $off><Screens /></RoundTool>
              <RoundTool><Smiley /></RoundTool>
              <PlainTool $width={44}><Gear color="#fff" sw={2.400} /></PlainTool>
              <PlainTool $width={36} $before={2}><Dock /></PlainTool>
            </PodTools>
          </PodBar>
          <PanelBar>
            <PanelTitle $gap={14}><People />ATTENDEES</PanelTitle>
            <Grip />
            <PanelEnd><SearchBox><Lens /></SearchBox></PanelEnd>
          </PanelBar>
          <Roster>
            <RosterList>
              <Section $before={0}>PRESENTERS</Section>
              <PersonRow lead initials="SC" name="Sylwia Cichacz-Przeni…" color="#8f47cc" />
              <Section $before={12}>ATTENDEES</Section>
              {people.map(([initials, name, color, web], i) => (
                <PersonRow key={i} initials={initials} name={name} color={color} web={web} />
              ))}
            </RosterList>
            <ScrollTrack><ScrollThumb /></ScrollTrack>
          </Roster>
          <PanelBar>
            <PanelTitle $gap={35}><Unread>2</Unread>CHAT</PanelTitle>
            <Grip />
            <PanelEnd $inset={6}><Gear color={MUTED} sw={2.200} /></PanelEnd>
          </PanelBar>
          <Resizer />
        </Side>
      </Body>
    </Page>
  );
}
